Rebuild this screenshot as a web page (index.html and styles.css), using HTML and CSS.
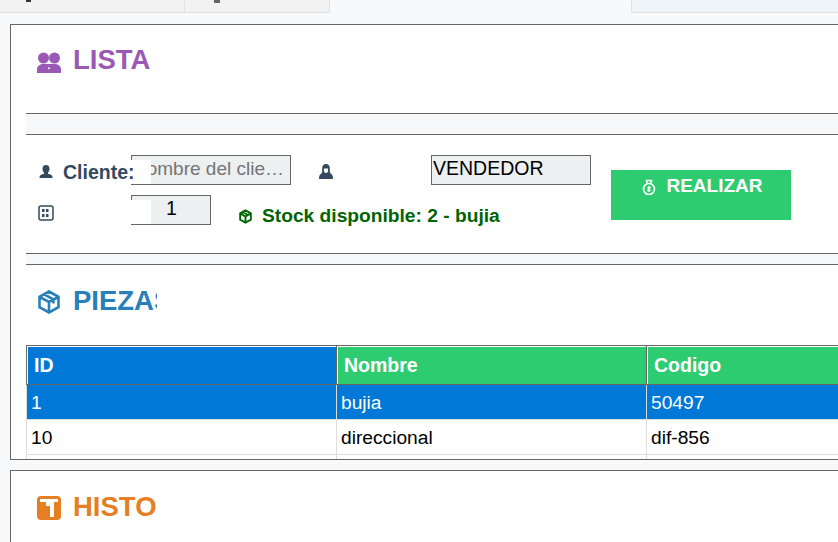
FILE: index.html
```html
<!DOCTYPE html>
<html lang="es">
<head>
	<meta charset="UTF-8">
	<title>Ventas</title>
	<link rel="stylesheet" href="styles.css">
</head>
<body>
	<div class="tabs">
		<div class="tab tab-a"><span class="tab-mark"></span></div>
		<div class="tab tab-b"><span class="tab-mark"></span></div>
		<div class="tab tab-active"></div>
		<div class="tab tab-rest"></div>
	</div>

	<div class="panel panel-list">
		<div class="head head-list">
			<svg class="head-icon" viewBox="0 0 24 24"><circle cx="6.500" cy="9" r="5.500" fill="#9b59b6"/><circle cx="17.500" cy="9" r="5.500" fill="#9b59b6"/><path fill="#9b59b6" d="M0 24v-4c0-2.500 2-4 5-5h14c3 1 5 2.500 5 5v4z"/><path fill="#fff" d="M11 18.500h2V20h-2z"/></svg>
			<div class="head-title title-purple">LISTA</div>
		</div>
		<div class="divider"></div>
		<div class="form">
			<div class="form-rows">
				<div class="form-row">
					<svg class="small-icon icon-user" viewBox="0 0 16 16"><path fill="#34495e" d="M8 1c2.300 0 3.500 1.700 3.500 3.800 0 1.500-.6 3-1.500 3.800v1.200c2 .6 4.500 1.200 4.500 3.200v1H1.500v-1c0-2 2.500-2.600 4.500-3.200V8.600C5.100 7.800 4.500 6.300 4.500 4.800 4.500 2.700 5.700 1 8 1z"/></svg>
					<label class="form-label">Cliente:</label>
					<div class="field field-name">
						<input class="input" type="text" placeholder="Nombre del cliente">
						<span class="field-mask"></span>
					</div>
					<svg class="small-icon icon-seller" viewBox="0 0 16 16"><path fill="#34495e" d="M8 0c2.500 0 3.800 1.700 3.800 4v3.500c0 1 .5 1.700 1.500 2.500 1.200.9 1.700 2.500 1.700 5H1c0-2.500.5-4.100 1.700-5 1-.8 1.500-1.500 1.500-2.500V4C4.200 1.700 5.500 0 8 0z"/><path fill="#fff" d="M6 4.500h4V7c0 1.200-.9 2-2 2S6 8.200 6 7z"/></svg>
					<input class="input input-seller" type="text" value="VENDEDOR" readonly>
				</div>
				<div class="form-row">
					<svg class="small-icon icon-numbers" viewBox="0 0 16 16">
						<rect x="1" y="1" width="14" height="14" rx="2" fill="#fff" stroke="#34495e" stroke-width="1.500"/>
						<path stroke="#34495e" stroke-width="3" stroke-dasharray="2.500 1.500" fill="none" d="M4 5.500h8M4 10.500h8"/>
					</svg>
					<div class="field field-qty">
						<input class="input input-qty" type="text" value="1">
						<span class="field-mask"></span>
					</div>
					<svg class="stock-icon" viewBox="0 0 16 16"><path fill="none" stroke="#006400" stroke-width="2" d="M8 1.500l5.700 3.200v6.600L8 14.500l-5.700-3.200V4.700zM2.300 4.700L8 8l5.700-3.300M8 8v6.500M5 3.200l5.700 3.200"/></svg>
					<span class="stock">Stock disponible: 2 - bujia</span>
				</div>
			</div>
			<button class="btn-make">
				<svg class="btn-icon" viewBox="0 0 16 16"><g fill="none" stroke="#fff"><circle cx="8" cy="10" r="5.500" stroke-width="1.600"/><path stroke-width="1.600" d="M6 4.500L5.500 1.500h5L10 4.500"/><path stroke-width="1.200" d="M9.700 8.300H7.200v1.700h1.600v1.700H6.300M8 7v6"/></g></svg>
				REALIZAR
			</button>
		</div>
		<div class="divider divider-thin"></div>
		<div class="head head-parts">
			<svg class="head-icon" viewBox="0 0 24 24"><path fill="none" stroke="#2980b9" stroke-width="2.600" d="M12 1.500l9.500 5.300v10.400L12 22.500l-9.500-5.300V6.800zM2.500 6.800L12 12l9.500-5.200M12 12v10.500M7 4.200l9.500 5.400v4"/></svg>
			<div class="head-title title-blue">PIEZAS</div>
		</div>
		<table class="parts">
			<thead>
				<tr>
					<th class="th-selected">ID</th>
					<th>Nombre</th>
					<th>Codigo</th>
				</tr>
			</thead>
			<tbody>
				<tr class="row-selected">
					<td>1</td>
					<td>bujia</td>
					<td>50497</td>
				</tr>
				<tr>
					<td>10</td>
					<td>direccional</td>
					<td>dif-856</td>
				</tr>
				<tr>
					<td></td>
					<td></td>
					<td></td>
				</tr>
			</tbody>
		</table>
	</div>

	<div class="panel panel-history">
		<div class="head head-history">
			<svg class="head-icon" viewBox="0 0 24 24"><rect x="0" y="0" width="24" height="24" rx="4" fill="#e67e22"/><path fill="#fff" d="M3 3h18v3h-4v15h-4V10H9V6H3z"/></svg>
			<div class="head-title title-orange">HISTORIAL</div>
		</div>
	</div>
</body>
</html>
```

FILE: styles.css
```css
*{
	box-sizing: border-box;
}
body{
	margin: 0;
	height: 542px;
	overflow: hidden;
	background-color: #f8f9fa;
	font-family: "Liberation Sans", Arial, sans-serif;
	font-size: 19.200px;
}
.tabs{
	display: flex;
	height: 13px;
	overflow: hidden;
}
.tab{
	height: 13px;
	border-bottom: 1px solid #e2e2e2;
	background-color: #f2f2f2;
}
.tab-a{
	width: 185px;
	padding-left: 26px;
	border-right: 1px solid #e2e2e2;
}
.tab-b{
	width: 145px;
	padding-left: 29px;
	border-right: 1px solid #e2e2e2;
}
.tab-active{
	width: 301px;
	background-color: #f8f9fa;
	border-bottom: 0;
}
.tab-rest{
	flex: 1;
	background-color: #eff4f9;
	border-left: 1px solid #e2e2e2;
}
.tab-mark{
	display: block;
	width: 5px;
	height: 2px;
	background-color: #333;
}
.tab-b .tab-mark{
	width: 6px;
	height: 3px;
	background-color: #666;
}
.panel{
	width: 900px;
	margin-left: 10px;
	background-color: #fff;
	border: 1px solid #666;
	overflow: hidden;
}
.panel-list{
	height: 436px;
	margin-top: 11px;
}
.panel-history{
	height: 100px;
	margin-top: 10px;
}
.head{
	display: flex;
	padding-left: 26px;
}
.head-list{
	height: 88px;
	padding-top: 20px;
}
.head-parts{
	height: 80px;
	padding-top: 21px;
}
.head-history{
	padding-top: 21px;
}
.head-icon{
	width: 24px;
	height: 24px;
	margin-top: 4px;
	flex: none;
}
.head-title{
	width: 84px;
	margin-left: 12px;
	overflow: hidden;
	white-space: nowrap;
	font-size: 27.500px;
	font-weight: bold;
	line-height: 30px;
}
.title-purple{
	color: #9b59b6;
}
.title-blue{
	color: #2980b9;
}
.title-orange{
	color: #e67e22;
}
.divider{
	height: 22px;
	margin-left: 15px;
	background-color: #f7f8fa;
	border-top: 1px solid #666;
	border-bottom: 1px solid #666;
}
.divider-thin{
	height: 12px;
}
.form{
	display: flex;
	height: 118px;
	padding: 20px 0 0 27px;
}
.form-rows{
	width: 553px;
}
.form-row{
	display: flex;
	align-items: center;
	height: 30px;
	margin-bottom: 10px;
}
.small-icon{
	width: 16px;
	height: 16px;
	flex: none;
}
.icon-user{
	margin-top: 4px;
}
.icon-seller{
	margin: 4px 97px 0 27px;
}
.icon-numbers{
	margin-top: 5px;
	margin-right: 77px;
}
.form-label{
	position: relative;
	z-index: 1;
	width: 67px;
	color: #34495e;
	font-size: 19.500px;
	font-weight: bold;
	margin-left: 10px;
	margin-top: 4px;
	white-space: nowrap;
	text-indent: -1px;
}
.field{
	position: relative;
	flex: none;
	height: 30px;
}
.field-name{
	width: 160px;
}
.field-qty{
	width: 80px;
}
.field-mask{
	position: absolute;
	left: 0;
	top: 5px;
	width: 20px;
	height: 24px;
	background-color: #fff;
}
.input{
	display: block;
	width: 100%;
	height: 30px;
	padding: 0 1px 3px;
	border: 1px solid #666;
	border-radius: 0;
	background-color: #ecf0f1;
	font-family: "Liberation Sans", Arial, sans-serif;
	font-size: 19.500px;
	color: #000;
	text-overflow: ellipsis;
}
.input::placeholder{
	color: #757575;
	font-size: 19px;
}
.input-seller{
	width: 160px;
	flex: none;
}
.input-qty{
	padding-left: 2px;
	padding-bottom: 3px;
	text-align: center;
}
.stock-icon{
	width: 15px;
	height: 15px;
	margin: 12px 0 0 27px;
	flex: none;
}
.stock{
	margin: 11px 0 0 9px;
	color: #006400;
	font-size: 19.200px;
	font-weight: bold;
}
.btn-make{
	display: flex;
	justify-content: center;
	align-items: center;
	gap: 9px;
	align-self: flex-start;
	width: 180px;
	height: 50px;
	margin: 15px 0 0 20px;
	padding: 0 0 18px 2px;
	border: 0;
	background-color: #2ecc71;
	color: #fff;
	font-family: "Liberation Sans", Arial, sans-serif;
	font-size: 19px;
	font-weight: bold;
}
.btn-icon{
	width: 16px;
	height: 16px;
	margin-top: 2px;
}
.parts{
	width: 931px;
	margin-left: 15px;
	table-layout: fixed;
	border-collapse: separate;
	border-spacing: 0;
	color: #000;
}
.parts th{
	width: 310px;
	height: 40px;
	padding: 0 0 0 7px;
	background-color: #2ecc71;
	border-top: 1px solid #666;
	border-bottom: 1px solid #666;
	border-right: 1px solid #666;
	box-shadow: inset 1px 1px 0 #fff;
	color: #fff;
	font-size: 19.500px;
	text-align: left;
}
.parts th:first-child{
	width: 311px;
	padding-left: 7px;
	border-left: 1px solid #666;
}
.parts .th-selected{
	background-color: #0078d7;
}
.parts td{
	height: 35px;
	padding: 1px 4px 0;
	background-color: #fff;
	border-right: 1px solid #ddd;
	border-bottom: 1px solid #ddd;
}
.parts td:first-child{
	padding-left: 4px;
	border-left: 1px solid #ddd;
}
.parts .row-selected td{
	background-color: #0078d7;
	color: #fff;
}
```
